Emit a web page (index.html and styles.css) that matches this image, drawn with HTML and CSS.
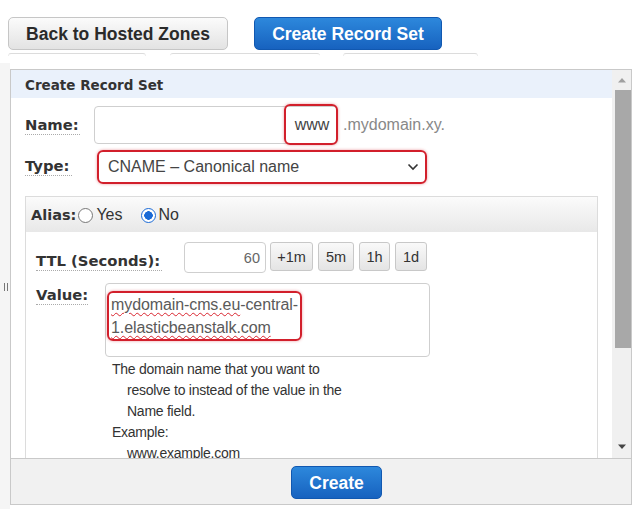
FILE: index.html
```html
<!DOCTYPE html>
<html>
<head>
<meta charset="utf-8">
<link rel="stylesheet" href="styles.css">
</head>
<body>
<div class="topbar">
  <div class="btn btn-gray btn-back">Back to Hosted Zones</div>
  <div class="btn btn-blue btn-create-set">Create Record Set</div>
</div>
<div class="tabs">
  <span class="tab t1"></span><span class="tab t2"></span><span class="tab t3"></span>
</div>
<div class="pane">
  <div class="splitter"><span class="grip"></span></div>
  <div class="dialog">
    <div class="dlg-main">
      <div class="content">
        <div class="dlg-title">Create Record Set</div>
        <div class="row row-name">
          <span class="label lbl-name">Name:</span>
          <div class="textbox name-box"><span class="www">www</span></div>
          <span class="suffix">.mydomain.xy.</span>
        </div>
        <div class="row row-type">
          <span class="label lbl-type">Type:</span>
          <div class="select">
            <span>CNAME – Canonical name</span>
            <svg class="chev" width="12" height="8" viewBox="0 0 12 8"><path d="M1.5 1.5 L6 6 L10.5 1.5" fill="none" stroke="#333" stroke-width="1.6"/></svg>
          </div>
        </div>
        <div class="panel">
          <div class="panel-head">
            <span class="label lbl-alias">Alias:</span>
            <span class="radio"></span><span class="rtext">Yes</span>
            <span class="radio checked"></span><span class="rtext">No</span>
          </div>
          <div class="panel-body">
            <div class="row row-ttl">
              <span class="label lbl-ttl">TTL (Seconds):</span>
              <div class="textbox ttl-box">60</div>
              <div class="small-btns">
                <span class="sbtn b1">+1m</span>
                <span class="sbtn b2">5m</span>
                <span class="sbtn b3">1h</span>
                <span class="sbtn b4">1d</span>
              </div>
            </div>
            <div class="row row-value">
              <span class="label lbl-value">Value:</span>
              <div class="value-col">
                <div class="textarea">
                  <div class="hl"><span class="sq">mydomain-cms.eu</span>-central-<br><span class="sq">1.elasticbeanstalk.com</span></div>
                </div>
                <div class="help">
                  <div>The domain name that you want to</div>
                  <div class="ind">resolve to instead of the value in the</div>
                  <div class="ind">Name field.</div>
                  <div>Example:</div>
                  <div class="ind">www.example.com</div>
                </div>
              </div>
            </div>
          </div>
        </div>
      </div>
      <div class="scrollbar">
        <svg class="arrow up" width="10" height="6" viewBox="0 0 10 6"><path d="M1 5.5 L5 1 L9 5.5 Z" fill="#a0a0a0"/></svg>
        <div class="thumb"></div>
        <div class="track-rest"></div>
        <svg class="arrow down" width="10" height="6" viewBox="0 0 10 6"><path d="M1 0.5 L5 5 L9 0.5 Z" fill="#444"/></svg>
      </div>
    </div>
    <div class="footer">
      <div class="btn btn-blue btn-create">Create</div>
    </div>
  </div>
</div>
</body>
</html>
```

FILE: styles.css
```css
html, body {
  margin: 0;
  padding: 0;
  background: #ffffff;
}
body {
  font-family: "Liberation Sans", Arial, sans-serif;
  color: #333;
  width: 640px;
  height: 509px;
  overflow: hidden;
}

/* top buttons */
.topbar {
  display: flex;
  gap: 26px;
  padding: 17px 0 0 8px;
}
.btn {
  box-sizing: border-box;
  height: 33px;
  display: flex;
  align-items: center;
  justify-content: center;
  font-weight: bold;
  font-size: 17.5px;
  border-radius: 5px;
  padding-top: 1px;
}
.btn-gray {
  background: linear-gradient(#fbfbfb, #e3e3e3);
  border: 1px solid #c6c6c6;
  color: #2a2a2a;
}
.btn-back { width: 220px; }
.btn-blue {
  background: linear-gradient(#2d88dc, #1762bf);
  border: 1px solid #1158b0;
  color: #fff;
}
.btn-create-set { width: 188px; }

.tabs {
  display: flex;
  height: 10px;
  margin-top: 3px;
}
.tab {
  box-sizing: border-box;
  height: 3px;
  border-top: 1px solid #dcdcdc;
  border-radius: 3px 3px 0 0;
}
.t1 { margin-left: 8px; width: 138px; border-left: 1px solid #ececec; border-right: 1px solid #ececec; }
.t2 { margin-left: 24px; width: 150px; }
.t3 { margin-left: 23px; width: 135px; border-left: 1px solid #ececec; border-right: 1px solid #ececec; }

/* pane */
.pane {
  display: flex;
}
.splitter {
  width: 10px;
  background: #f5f5f5;
  position: relative;
  height: 446px;
}
.grip {
  position: absolute;
  left: 4px;
  top: 220px;
  width: 1px;
  height: 8px;
  border-left: 1px solid #777;
  border-right: 1px solid #777;
  padding-left: 1px;
}
.dialog {
  margin-top: 6px;
  width: 622px;
  height: 436px;
  box-sizing: border-box;
  border: 1px solid #c9c9c9;
  display: flex;
  flex-direction: column;
}
.dlg-main {
  display: flex;
  height: 388px;
}
.content {
  width: 601px;
  overflow: hidden;
  background: #fff;
}
.dlg-title {
  height: 28px;
  line-height: 31px;
  background: #eaf1fb;
  padding-left: 14px;
  font-family: "DejaVu Sans", Verdana, sans-serif;
  font-weight: bold;
  font-size: 13.5px;
  color: #333;
}

.label {
  font-family: "DejaVu Sans", Verdana, sans-serif;
  font-weight: bold;
  font-size: 14.8px;
  color: #333;
  border-bottom: 1px dotted #aaa;
  line-height: 18px;
  white-space: nowrap;
}

.row {
  display: flex;
  align-items: center;
}
.row-name {
  margin-top: 8px;
  padding-left: 14px;
  height: 38px;
}
.lbl-name { width: 55px; margin-right: 14px; }
.textbox {
  box-sizing: border-box;
  border: 1px solid #cfcfcf;
  border-radius: 4px;
  background: #fff;
}
.name-box {
  width: 244px;
  height: 38px;
  display: flex;
  justify-content: flex-end;
}
.www {
  box-sizing: border-box;
  width: 54px;
  margin: -3px -1px -2px 0;
  border: 2px solid #d21f2b;
  border-radius: 6px;
  box-shadow: 0 0 3px rgba(210, 31, 43, 0.45);
  font-size: 16px;
  color: #444;
  display: flex;
  align-items: center;
  justify-content: center;
  padding-left: 2px;
}
.suffix {
  margin-left: 5px;
  font-size: 16px;
  color: #888;
}

.row-type {
  margin-top: 6px;
  padding-left: 14px;
  height: 33px;
}
.lbl-type { width: 47px; margin-right: 25px; }
.select {
  box-sizing: border-box;
  width: 330px;
  height: 34px;
  border: 2px solid #d21f2b;
  border-radius: 6px;
  box-shadow: 0 0 3px rgba(210, 31, 43, 0.45);
  display: flex;
  align-items: center;
  justify-content: space-between;
  padding: 0 6px 0 9px;
  font-size: 16px;
  color: #444;
}

/* alias panel */
.panel {
  margin: 13px 0 0 14px;
  width: 573px;
  box-sizing: border-box;
  border: 1px solid #dcdcdc;
  border-bottom: none;
  height: 262px;
}
.panel-head {
  height: 35px;
  background: linear-gradient(#fbfbfb, #e8e8e8);
  display: flex;
  align-items: center;
  padding-left: 5px;
  padding-top: 1px;
  box-sizing: border-box;
}
.lbl-alias { border-bottom: none; margin-right: 2px; font-size: 14.5px; }
.radio {
  box-sizing: border-box;
  width: 15px;
  height: 15px;
  border-radius: 50%;
  border: 1px solid #777;
  background: #fff;
  margin-right: 3px;
}
.radio.checked {
  border: 1px solid #1a6ad6;
  background: radial-gradient(circle, #1a6ad6 0 4px, #fff 4.5px);
}
.rtext {
  font-size: 16px;
  color: #333;
  margin-right: 18px;
}

.panel-body {
  padding: 10px 0 0 10px;
}
.row-ttl {
  height: 31px;
  align-items: flex-start;
}
.lbl-ttl { margin-top: 10px; width: 126px; margin-right: 22px; }
.ttl-box {
  width: 82px;
  height: 31px;
  display: flex;
  align-items: center;
  justify-content: flex-end;
  padding-right: 5px;
  font-size: 14.5px;
  color: #666;
}
.small-btns {
  display: flex;
  gap: 5px;
  margin-left: 4px;
}
.sbtn {
  box-sizing: border-box;
  height: 29px;
  display: flex;
  align-items: center;
  justify-content: center;
  background: linear-gradient(#f9f9f9, #e4e4e4);
  border: 1px solid #c8c8c8;
  border-radius: 3px;
  font-size: 14.5px;
  color: #333;
}
.b1 { width: 43px; }
.b2 { width: 36px; }
.b3 { width: 31px; }
.b4 { width: 32px; }

.row-value {
  margin-top: 10px;
  align-items: flex-start;
}
.lbl-value { width: 52px; margin-right: 17px; margin-top: 3px; }
.textarea {
  box-sizing: border-box;
  width: 325px;
  height: 74px;
  border: 1px solid #cfcfcf;
  border-radius: 4px;
  padding: 7px 0 0 1px;
}
.hl {
  display: inline-block;
  border: 2px solid #d21f2b;
  border-radius: 6px;
  box-shadow: 0 0 3px rgba(210, 31, 43, 0.45);
  padding: 0 2px;
  font-size: 16px;
  line-height: 23px;
  color: #5a5a5a;
  letter-spacing: -0.1px;
}
.sq {
  text-decoration: underline wavy #d9252f;
  text-decoration-thickness: 1px;
  text-underline-offset: 2px;
}
.help {
  padding: 2px 0 0 7px;
  font-size: 14px;
  line-height: 21px;
  color: #333;
  letter-spacing: -0.25px;
}
.help .ind { padding-left: 15px; }

/* scrollbar */
.scrollbar {
  width: 19px;
  background: #f0f0f0;
  display: flex;
  flex-direction: column;
  align-items: center;
}
.arrow.up { margin-top: 7px; }
.thumb {
  margin-top: 7px;
  width: 16px;
  margin-left: 2px;
  height: 258px;
  background: #a8a8a8;
}
.track-rest { flex: 1; }
.arrow.down { margin-bottom: 8px; }

.footer {
  flex: 1;
  border-top: 1px solid #c9c9c9;
  background: #f1f1f1;
  display: flex;
  padding: 7px 0 0 280px;
}
.btn-create { width: 91px; height: 33px; }
```
